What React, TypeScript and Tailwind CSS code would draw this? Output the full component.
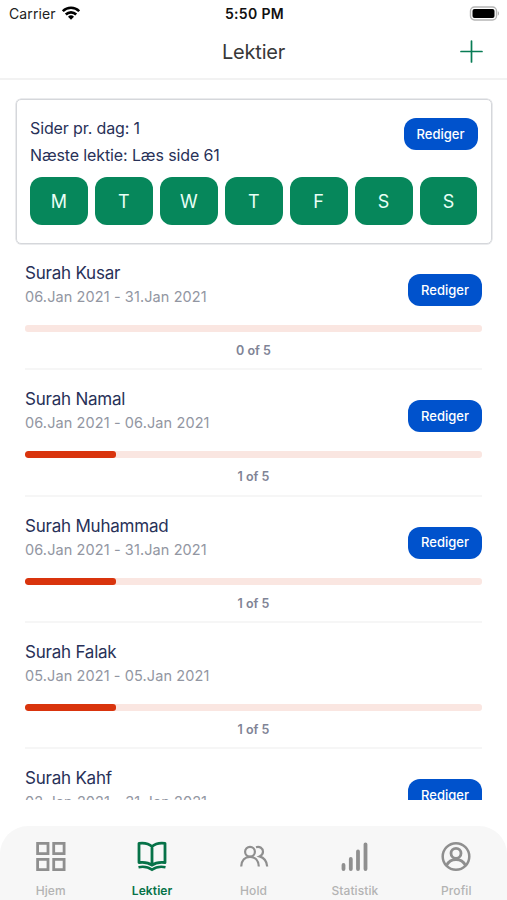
import type { ReactNode } from "react";

interface Lesson {
  title: string;
  dates: string;
  done: number;
  total: number;
  editable: boolean;
}

const DAYS = ["M", "T", "W", "T", "F", "S", "S"];

const LESSONS: Lesson[] = [
  { title: "Surah Kusar", dates: "06.Jan 2021 - 31.Jan 2021", done: 0, total: 5, editable: true },
  { title: "Surah Namal", dates: "06.Jan 2021 - 06.Jan 2021", done: 1, total: 5, editable: true },
  { title: "Surah Muhammad", dates: "06.Jan 2021 - 31.Jan 2021", done: 1, total: 5, editable: true },
  { title: "Surah Falak", dates: "05.Jan 2021 - 05.Jan 2021", done: 1, total: 5, editable: false },
  { title: "Surah Kahf", dates: "02.Jan 2021 - 31.Jan 2021", done: 1, total: 5, editable: true },
];

function EditButton() {
  return (
    <button
      type="button"
      className="h-8 w-[74px] shrink-0 rounded-[12px] bg-[#0052cc] pt-px text-[13px] font-medium text-white"
    >
      Rediger
    </button>
  );
}

function StatusBar() {
  return (
    <div className="grid h-[26px] grid-cols-3 items-center pr-[7px] pl-[9px] text-[14px] text-[#222]">
      <div className="flex items-center gap-[6px]">
        <span className="tracking-[0.12px]">Carrier</span>
        <svg viewBox="0 0 18 14" className="h-[14px] w-[18px]" fill="none" stroke="#000" strokeWidth="2.6">
          <path d="M.8 5.2a11.6 11.6 0 0 1 16.4 0" />
          <path d="M3.8 8.5a7.4 7.4 0 0 1 10.4 0" />
          <path d="M9 13.8 6 10.7a4.3 4.3 0 0 1 6 0z" fill="#000" stroke="none" />
        </svg>
      </div>
      <span className="text-center text-[14px] font-semibold tracking-[0.35px] text-[#111]">5:50 PM</span>
      <svg viewBox="0 0 31 15" className="h-[15px] w-[31px] justify-self-end">
        <rect x="1.5" y="1" width="26" height="13" rx="4" fill="#fff" stroke="#b5b5b5" strokeWidth="1.4" />
        <rect x="3.5" y="3" width="22" height="9" rx="2" fill="#000" />
        <path d="M28.8 5.3c1.6.6 1.6 3.8 0 4.4z" fill="#b0b0b0" />
      </svg>
    </div>
  );
}

function Header() {
  return (
    <header className="grid h-[54px] grid-cols-3 items-center border-b-2 border-[#f2f2f2] px-6">
      <h1 className="col-start-2 text-center text-[20px] tracking-[-0.2px] text-[#383838]">Lektier</h1>
      <button type="button" aria-label="Tilføj" className="justify-self-end pb-px">
        <svg viewBox="0 0 23 23" className="h-[23px] w-[23px]" stroke="#087c55" strokeWidth="1.7" strokeLinecap="round">
          <path d="M11.5 1v21M1 11.5h21" />
        </svg>
      </button>
    </header>
  );
}

function PlanCard() {
  return (
    <section className="mr-[15px] ml-[15.5px] mt-[18.5px] h-[145.5px] rounded-[5px] border-[1.5px] border-[#d5d7db] px-[13.5px] pt-[15px] shadow-[0_0_0_0.5px_#d5d7db]">
      <div className="flex items-start justify-between">
        <div className="text-[16px] leading-[27.5px] tracking-[-0.12px] text-[#283158]">
          <p>Sider pr. dag: 1</p>
          <p>Næste lektie: Læs side 61</p>
        </div>
        <div className="pt-[3.5px]">
          <EditButton />
        </div>
      </div>
      <div className="mt-[7.5px] grid grid-cols-7 gap-[7px]">
        {DAYS.map((day, i) => (
          <div
            key={i}
            className="flex h-[48px] items-center justify-center rounded-[12px] bg-[#06875b] text-[18px] text-[#e8fff6]"
          >
            {day}
          </div>
        ))}
      </div>
    </section>
  );
}

function LessonRow({ lesson }: { lesson: Lesson }) {
  return (
    <li className="h-[126.25px] shrink-0 border-b-2 border-[#f6f6f6] pt-[17px]">
      <div className="flex h-[48px] items-start justify-between">
        <div>
          <h2 className="text-[17px] leading-[24px] tracking-[-0.22px] text-[#283158]">{lesson.title}</h2>
          <p className="text-[14.5px] leading-[24px] tracking-[0.1px] text-[#9296a2]">{lesson.dates}</p>
        </div>
        {lesson.editable && (
          <div className="pt-[13px]">
            <EditButton />
          </div>
        )}
      </div>
      <div className="mt-[16px] h-[7px] overflow-hidden rounded-[3px] bg-[#fae6e1]">
        <div
          className="h-full rounded-[3px] bg-[#d9340d]"
          style={{ width: `${(lesson.done / lesson.total) * 100}%` }}
        />
      </div>
      <p className="mt-[9px] text-center text-[12.5px] leading-[20px] font-semibold text-[#7f8496]">
        {lesson.done} of {lesson.total}
      </p>
    </li>
  );
}

function Tab({ label, active = false, children }: { label: string; active?: boolean; children: ReactNode }) {
  return (
    <button
      type="button"
      className={`flex flex-1 flex-col items-center pt-[14px] ${active ? "text-[#067248]" : "text-[#8f8f8f]"}`}
    >
      <svg viewBox="0 0 32 32" className="h-8 w-8 shrink-0" fill="none" stroke="currentColor" strokeWidth="2.8">
        {children}
      </svg>
      <span
        className={`mt-[10px] text-[12px] leading-[18px] tracking-[0.1px] ${active ? "font-semibold" : "font-medium text-[#b3b3b3]"}`}
      >
        {label}
      </span>
    </button>
  );
}

function TabBar() {
  return (
    <nav className="flex h-[74px] shrink-0 rounded-t-[28px] bg-[#f7f7f7]">
      <Tab label="Hjem">
        <path d="M2.6 3.3H13v10.4H2.6zM18.7 3.3h10.4v10.4H18.7zM2.6 19.3H13v10.4H2.6zM18.7 19.3h10.4v10.4H18.7z" />
      </Tab>
      <Tab label="Lektier" active>
        <path
          d="M16 6.5C12.5 3.2 8 2.7 3 3.3v19.2c5-.6 9.500-.1 13 2.7 3.500-2.800 8-3.300 13-2.700V3.300C24 2.700 19.500 3.200 16 6.500zM16 6.500V25"
          strokeLinejoin="round"
        />
        <path d="M2.500 27.200c5.500-1.200 9.500-.4 13.500 2.600 4-3 8-3.800 13.500-2.600" strokeWidth="2.5" />
      </Tab>
      <Tab label="Hold">
        <circle cx="12" cy="11.7" r="4.9" strokeWidth="2.2" />
        <path d="M3.2 26.500c.3-6.200 3.800-9.700 8.800-9.700s8.500 3.500 8.800 9.700" strokeWidth="2.2" />
        <path d="M18 7.200c3.800-1.200 7 1.200 7 4.500 0 2-1.300 3.600-3.500 4.700 4.500 1.300 7.300 5 7.700 10.100" strokeWidth="2.2" />
      </Tab>
      <Tab label="Statistik">
        <path d="M4.500 25v4M11.800 19v10M19 11.500V29M26.500 4.300V29" strokeWidth="3.8" strokeLinecap="round" />
      </Tab>
      <Tab label="Profil">
        <circle cx="16" cy="16.500" r="13.300" strokeWidth="2.5" />
        <circle cx="16" cy="13.300" r="5" />
        <path d="M6.500 25.500c2-4.200 5.500-6 9.500-6s7.500 1.800 9.500 6" />
      </Tab>
    </nav>
  );
}

export default function App() {
  return (
    <div className="flex h-[900px] w-[507px] flex-col overflow-hidden bg-white font-['Inter','Liberation_Sans',sans-serif]">
      <StatusBar />
      <Header />
      <main className="h-[720px] shrink-0 overflow-hidden">
        <PlanCard />
        <ul className="flex flex-col px-[25px]">
          {LESSONS.map((lesson) => (
            <LessonRow key={lesson.title} lesson={lesson} />
          ))}
        </ul>
      </main>
      <div className="flex-1" />
      <TabBar />
    </div>
  );
}
